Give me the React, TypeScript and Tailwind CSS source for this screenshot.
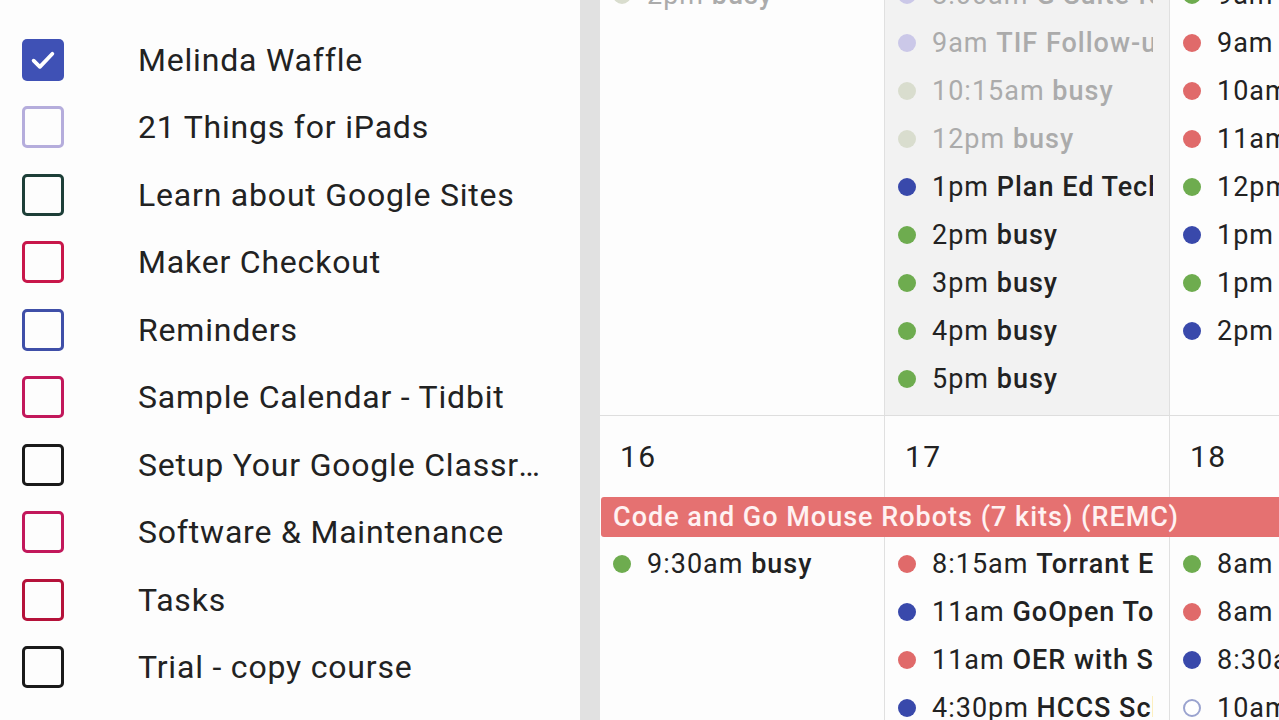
type Ev = {
  time: string;
  title: string;
  dot: string;
  faded?: boolean;
  hollow?: boolean;
};

const calendars = [
  { name: "Melinda Waffle", color: "#3f51b5", checked: true },
  { name: "21 Things for iPads", color: "#b5addc" },
  { name: "Learn about Google Sites", color: "#1d3f38" },
  { name: "Maker Checkout", color: "#c8174a" },
  { name: "Reminders", color: "#3f4fa8" },
  { name: "Sample Calendar - Tidbit", color: "#c2185b" },
  { name: "Setup Your Google Classroom", color: "#1a1a1a" },
  { name: "Software & Maintenance", color: "#c2185b" },
  { name: "Tasks", color: "#b5123a" },
  { name: "Trial - copy course", color: "#1a1a1a" },
];

const GREEN = "#6eac4f";
const RED = "#e06a6a";
const BLUE = "#3949ab";
const LAV = "#cbc8e8";
const PALE = "#d9ddce";

const week1: Ev[][] = [
  [{ time: "2pm", title: "busy", dot: PALE, faded: true }],
  [
    { time: "8:00am", title: "G Suite for Edu", dot: LAV, faded: true },
    { time: "9am", title: "TIF Follow-up", dot: LAV, faded: true },
    { time: "10:15am", title: "busy", dot: PALE, faded: true },
    { time: "12pm", title: "busy", dot: PALE, faded: true },
    { time: "1pm", title: "Plan Ed Tech", dot: BLUE },
    { time: "2pm", title: "busy", dot: GREEN },
    { time: "3pm", title: "busy", dot: GREEN },
    { time: "4pm", title: "busy", dot: GREEN },
    { time: "5pm", title: "busy", dot: GREEN },
  ],
  [
    { time: "9am", title: "busy", dot: GREEN },
    { time: "9am", title: "Staff PD", dot: RED },
    { time: "10am", title: "Staff PD", dot: RED },
    { time: "11am", title: "Staff PD", dot: RED },
    { time: "12pm", title: "busy", dot: GREEN },
    { time: "1pm", title: "Planning", dot: BLUE },
    { time: "1pm", title: "busy", dot: GREEN },
    { time: "2pm", title: "Meeting", dot: BLUE },
  ],
];

const week2: Ev[][] = [
  [{ time: "9:30am", title: "busy", dot: GREEN }],
  [
    { time: "8:15am", title: "Torrant Elementary", dot: RED },
    { time: "11am", title: "GoOpen Tools", dot: BLUE },
    { time: "11am", title: "OER with Schoology", dot: RED },
    { time: "4:30pm", title: "HCCS School", dot: BLUE },
  ],
  [
    { time: "8am", title: "busy", dot: GREEN },
    { time: "8am", title: "Robots", dot: RED },
    { time: "8:30am", title: "Meeting", dot: BLUE },
    { time: "10am", title: "Reminder", dot: "#9aa3cf", hollow: true },
  ],
];

function EventRow({ ev }: { ev: Ev }) {
  return (
    <div className="flex h-[48px] items-center pl-[13px] pr-[16px]">
      {ev.hollow ? (
        <span
          className="h-[18px] w-[18px] shrink-0 rounded-full border-2 bg-white"
          style={{ borderColor: ev.dot }}
        />
      ) : (
        <span
          className="h-[18px] w-[18px] shrink-0 rounded-full"
          style={{ background: ev.dot }}
        />
      )}
      <div
        className={`ml-[16px] min-w-0 overflow-hidden whitespace-nowrap text-[27px] tracking-[1px] ${
          ev.faded ? "text-[#ababab]" : "text-[#222]"
        }`}
      >
        <span>{ev.time}</span> <span className="font-medium">{ev.title}</span>
      </div>
    </div>
  );
}

export default function App() {
  return (
    <div className="flex h-[720px] w-[1279px] overflow-hidden bg-white font-['Roboto',sans-serif]">
      {/* sidebar */}
      <div className="w-[580px] shrink-0 bg-[#fdfdfd]">
        <div className="-mt-[30px] flex h-[33px] items-end justify-between pl-[22px] pr-[40px] text-[26px] leading-none text-[#cfcfcf]">
          <span>Other calendars</span>
          <span>+</span>
        </div>
        <div className="pt-[23px]">
          {calendars.map((c) => (
            <div key={c.name} className="flex h-[67.5px] items-center pl-[22px]">
              {c.checked ? (
                <span
                  className="flex h-[42px] w-[42px] shrink-0 items-center justify-center rounded-[5px]"
                  style={{ background: c.color }}
                >
                  <svg width="30" height="30" viewBox="0 0 24 24" fill="none">
                    <path
                      d="M4.5 12.5l5 5L19.5 7"
                      stroke="white"
                      strokeWidth="3"
                      strokeLinecap="round"
                      strokeLinejoin="round"
                    />
                  </svg>
                </span>
              ) : (
                <span
                  className="h-[42px] w-[42px] shrink-0 rounded-[5px] border-[3px]"
                  style={{ borderColor: c.color }}
                />
              )}
              <span className="ml-[74px] w-[410px] truncate text-[32px] tracking-[0.8px] text-[#222]">
                {c.name}
              </span>
            </div>
          ))}
        </div>
      </div>

      {/* gutter */}
      <div className="w-[20px] shrink-0 bg-[#e1e1e1]" />

      {/* calendar */}
      <div className="flex min-w-0 flex-1 flex-col overflow-hidden">
        {/* week 1 */}
        <div className="grid h-[416px] shrink-0 grid-cols-[284px_285px_285px] border-b border-[#dedede]">
          {week1.map((col, i) => (
            <div
              key={i}
              className={`overflow-hidden ${i > 0 ? "border-l border-[#e0e0e0]" : ""} ${
                i === 1 ? "bg-[#f2f2f2]" : "bg-[#fdfdfd]"
              }`}
            >
              <div className="-mt-[29px]">
                {col.map((ev, j) => (
                  <EventRow key={j} ev={ev} />
                ))}
              </div>
            </div>
          ))}
        </div>

        {/* week 2 */}
        <div className="grid flex-1 grid-cols-[284px_285px_285px] grid-rows-[81px_40px_1fr] bg-[#fdfdfd]">
          {["16", "17", "18"].map((d, i) => (
            <div
              key={d}
              className={`flex items-center pl-[20px] text-[30px] tracking-[1.5px] text-[#222] ${
                i > 0 ? "border-l border-[#e0e0e0]" : ""
              }`}
            >
              {d}
            </div>
          ))}
          <div className="col-span-3 ml-[1px] flex items-center overflow-hidden whitespace-nowrap rounded-l-[3px] bg-[#e57171] pl-[12px] text-[27px] font-medium tracking-[1px] text-[#fff2f2]">
            Code and Go Mouse Robots (7 kits) (REMC)
          </div>
          {week2.map((col, i) => (
            <div
              key={i}
              className={`overflow-hidden pt-[3px] ${i > 0 ? "border-l border-[#e0e0e0]" : ""}`}
            >
              {col.map((ev, j) => (
                <EventRow key={j} ev={ev} />
              ))}
            </div>
          ))}
        </div>
      </div>
    </div>
  );
}
